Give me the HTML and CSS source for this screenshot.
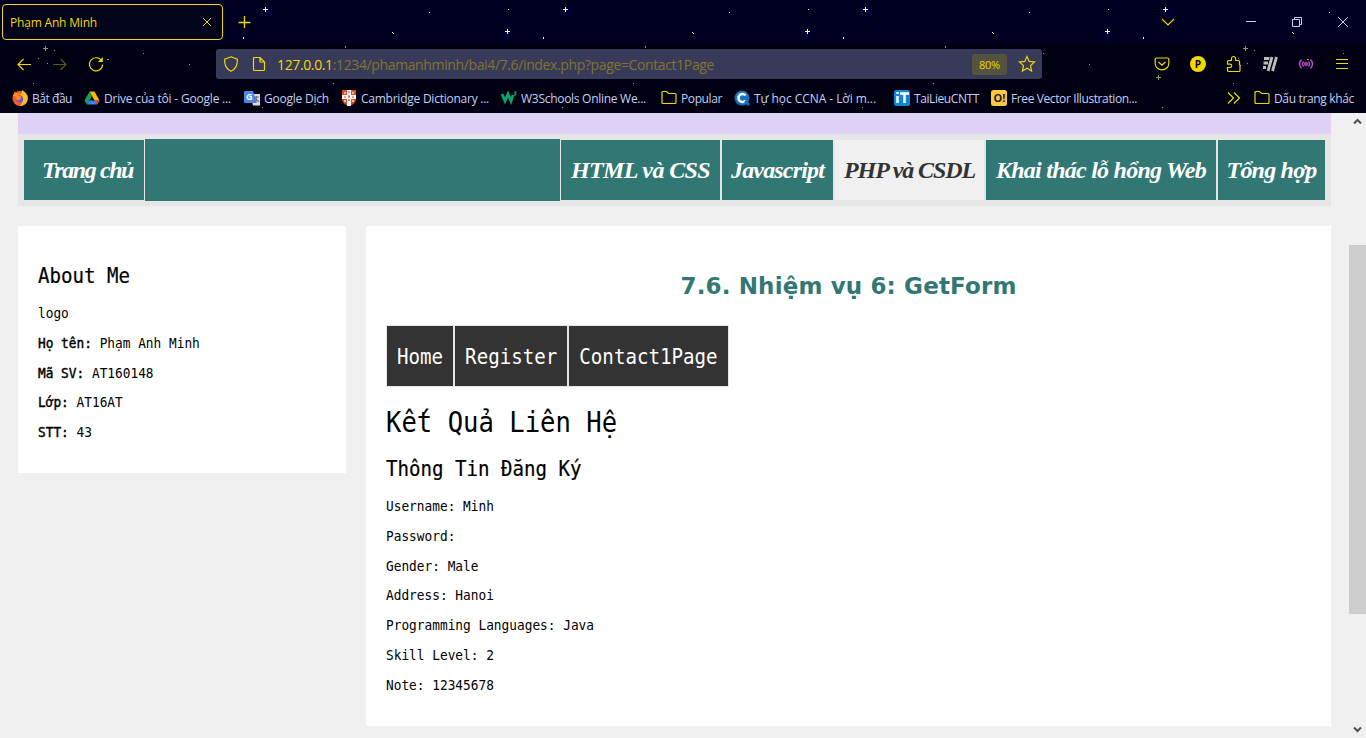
FILE: index.html
```html
<!DOCTYPE html>
<html lang="vi">
<head>
<meta charset="utf-8">
<title>Phạm Anh Minh</title>
<link rel="stylesheet" href="styles.css">
</head>
<body>
<header class="chrome">
  <svg class="stars" width="1366" height="113">
    <defs>
      <pattern id="sky" width="300" height="113" patternUnits="userSpaceOnUse">
        <circle cx="267" cy="12" r="6" fill="#000033"/><circle cx="207" cy="33" r="6" fill="#000033"/>
        <g fill="#ffff8c" shape-rendering="crispEdges">
          <path d="M263 9h5v1h-5zM265 7h1v5h-1zM205 31h5v1h-5zM207 29h1v5h-1zM243 37h1v2h-1zM129 12h1v1h-1zM208 9h1v1h-1zM92 32h1v1h-1zM93 33h1v1h-1z"/>
          <path opacity=".6" d="M43 48h5v1h-5zM45 46h1v5h-1zM54 50h1v1h-1zM38 58h1v1h-1zM47 63h1v1h-1zM143 53h1v1h-1zM189 64h1v1h-1zM107 59h2v1h-2zM33 83h1v1h-1zM262 107h1v1h-1zM256 77h5v1h-5zM258 75h1v5h-1z"/>
        </g>
      </pattern>
    </defs>
    <rect width="1366" height="44" fill="#000021"/><rect y="44" width="1366" height="69" fill="#000013"/>
    <rect width="1366" height="113" fill="url(#sky)"/>
  </svg>
  <div class="tabs">
    <div class="tab"><span class="fit" data-w="87">Phạm Anh Minh</span>
      <svg width="16" height="16"><path d="M4 4l8 8M12 4l-8 8" stroke-width="1"/></svg></div>
    <svg class="plus" width="16" height="16"><path d="M7.500 2v12M1.500 8.500h12" stroke-width="1.300"/></svg>
    <svg class="chev" width="16" height="16"><path d="M2 5l6 6 6-6"/></svg>
    <div class="win">
      <svg width="16" height="16"><path d="M3 7.500h10"/></svg>
      <svg width="16" height="16"><path d="M3.500 5.500h7v7h-7zM5.500 5.500v-2h7v7h-2"/></svg>
      <svg width="16" height="16"><path d="M3 3l10 10M13 3L3 13"/></svg>
    </div>
  </div>
  <div class="toolbar">
    <div class="tools">
      <svg width="18" height="18"><path d="M16 9.500H2.500M8.500 4L3 9.500 8.500 15"/></svg>
      <svg class="dim" width="18" height="18"><path d="M2 9.500h13.500M9.500 4L15 9.500 9.500 15"/></svg>
      <svg width="18" height="18"><path d="M14.700 6A6.600 6.600 0 1 0 15.600 9.500"/><path d="M15.800 2v5h-5z" fill="#f0d800" stroke="none"/></svg>
    </div>
    <div class="url">
      <svg width="18" height="18"><path d="M9 1.800l6.300 2.400c.5 5.500-1 9.400-6.300 12C3.700 13.600 2.200 9.700 2.700 4.200z"/></svg>
      <svg class="doc" width="18" height="18"><path d="M4.500 2.500h5.500L14.500 7v7.500q0 1-1 1h-9q-1 0-1-1v-11q0-1 1-1zM10 2.500V7h4.500"/></svg>
      <span class="addr fit" data-w="437"><b>127.0.0.1</b>:1234/phamanhminh/bai4/7.6/index.php?page=Contact1Page</span>
      <span class="zoom"><span class="fit" data-w="21">80%</span></span>
      <svg class="star" width="18" height="18"><path d="M9 1.500l2.200 4.900 5.300.6-4 3.600 1.100 5.400L9 13.300 4.400 16l1.100-5.400-4-3.600 5.300-.6z"/></svg>
    </div>
    <div class="tools right">
      <svg width="18" height="18"><path d="M3.500 3h11q1.300 0 1.300 1.300V8.500a6.800 6.400 0 0 1-13.600 0V4.300Q2.200 3 3.500 3zM5.500 7l3.500 3.300L12.500 7"/></svg>
      <svg width="18" height="18"><circle cx="9" cy="9" r="8" fill="#f0d800" stroke="none"/><text x="5.800" y="13" class="pmark">P</text></svg>
      <svg width="18" height="18"><path d="M6.500 5.500V3.500a2 2 0 0 1 4 0v2H13.500q1 0 1 1v3.500q1.500 0 .5 1.500v4q0 1-1 1H4q-1.500 0-1.500-1v-3h2.500a1.700 1.700 0 0 0 0-3.400H2.500v-2.500q0-1 1-1z"/></svg>
      <svg width="18" height="18"><path d="M3 3.500h5.500M2.500 8h4.500M2 12.500h3M11 2L7 16M15.500 2l-4 14" stroke="#bdbdbd" stroke-width="2.800"/></svg>
      <svg width="18" height="18" class="radio"><path d="M4.500 4.500Q0.500 9 4.500 13.500M13.500 4.500Q17.500 9 13.500 13.500M6.500 6.500q-2 2.500 0 5M11.500 6.500q2 2.500 0 5"/><circle cx="9" cy="9" r="1.300"/></svg>
      <svg width="18" height="18"><path d="M3 4.500h12M3 8.500h12M3 13.500h12" shape-rendering="crispEdges"/></svg>
    </div>
  </div>
  <div class="bookmarks">
    <div><svg width="16" height="16"><g stroke="none"><circle cx="8" cy="8.500" r="7.500" fill="#ff5b24"/><path d="M10 0q7 4 5.600 10a7.500 7.500 0 0 1-8 6Q13 12 8 5q2-2 2-5z" fill="#ffbd25"/><path d="M.6 6L3 1.500l2 2q3 0 4 2L7 7Z" fill="#ff8a16"/><circle cx="7.700" cy="9" r="3.500" fill="#7550d8"/><path d="M4 6q4-1 6 2-3 0-2 2-3 1-4-1z" fill="#ff8c1c"/></g></svg><span class="fit" data-w="40">Bắt đầu</span></div>
    <div><svg width="16" height="16"><g stroke="none"><path d="M5.500 1.500h5l5 9h-5z" fill="#ffba00"/><path d="M5.500 1.500L8 6l-5 8.500L.500 10.500z" fill="#0fa45c"/><path d="M5.500 10.500h10L13 14.500H3z" fill="#3b83f5"/><path d="M10.500 10.500h5l-2.500 4z" fill="#e94335"/></g></svg><span class="fit" data-w="127">Drive của tôi - Google ...</span></div>
    <div><svg width="16" height="16"><g stroke="none"><path d="M6 4h10v11.500H9z" fill="#ddd"/><path d="M1 1h8l4 12H1q-1 0-1-1V2q0-1 1-1z" fill="#4885ed"/><text x="2" y="10" class="gicon">G</text><path d="M10 7h5M12.500 6v2l-2 4M11 8l4 4" stroke="#667788" fill="none"/></g></svg><span class="fit" data-w="65">Google Dịch</span></div>
    <div><svg width="16" height="16"><path d="M1 0h14v9q0 5-7 7-7-2-7-7z" fill="#d84c34" stroke="none"/><path d="M8 0v16M1 7h14" stroke="#fff" stroke-width="4"/><path d="M3 3h2M11 3h2M3 11h2M11 11h2" stroke="#f3c65b" stroke-width="2"/><path d="M8 1v12M3 7h10" stroke="#d84c34" stroke-dasharray="2 2"/></svg><span class="fit" data-w="128">Cambridge Dictionary ...</span></div>
    <div><svg width="16" height="16"><path d="M1 4l3 7 3-7 3 7 2-6" stroke="#04a86b" stroke-width="2.800"/><path d="M13 2h2l-1 1.500q2 1-1 2" stroke="#04a86b"/></svg><span class="fit" data-w="125">W3Schools Online We...</span></div>
    <div><svg width="16" height="16"><path d="M1 12.500v-10q0-1 1-1h3.500l2 2H14q1 0 1 1v8q0 1-1 1H2q-1 0-1-1z"/></svg><span class="fit" data-w="41">Popular</span></div>
    <div><svg width="16" height="16"><circle cx="8" cy="8" r="7.500" fill="#1572bd" stroke="none"/><path d="M11.500 5.500a4 4 0 1 0 0 5" stroke="#fff" stroke-width="2.500"/><path d="M11 11l4 4" stroke="#1572bd" stroke-width="3"/></svg><span class="fit" data-w="122">Tự học CCNA - Lời m...</span></div>
    <div><svg width="16" height="16"><rect width="16" height="16" rx="2" fill="#0a88d1" stroke="none"/><path d="M3.500 6v7M6 3.500h9M10.500 3.500V13M3.500 2v2" stroke="#fff" stroke-width="2.500"/></svg><span class="fit" data-w="65">TaiLieuCNTT</span></div>
    <div><svg width="16" height="16"><rect width="16" height="16" rx="2.500" fill="#ffc83d" stroke="none"/><text x="2.500" y="12" class="oicon">O!</text></svg><span class="fit" data-w="126">Free Vector Illustration...</span></div>
    <div><svg width="16" height="16"><path d="M2 2.500L7.500 8 2 13.500M8 2.500L13.500 8 8 13.500"/></svg></div>
    <div><svg width="16" height="16"><path d="M1 12.500v-10q0-1 1-1h3.500l2 2H14q1 0 1 1v8q0 1-1 1H2q-1 0-1-1z"/></svg><span class="fit" data-w="80">Dấu trang khác</span></div>
  </div>
</header>
<div class="view">
  <div class="page">
    <div class="banner"></div>
    <nav class="menu">
      <a class="home"><span class="fit" data-w="91">Trang chủ</span></a>
      <a class="blank"></a>
      <a class="html"><span class="fit" data-w="139">HTML và CSS</span></a>
      <a class="js"><span class="fit" data-w="93">Javascript</span></a>
      <a class="php"><span class="fit" data-w="131">PHP và CSDL</span></a>
      <a class="web"><span class="fit" data-w="210">Khai thác lỗ hổng Web</span></a>
      <a class="all"><span class="fit" data-w="90">Tổng hợp</span></a>
    </nav>
    <div class="columns">
      <aside class="card about">
        <h2>About Me</h2>
        <p>logo</p>
        <p><strong>Họ tên:</strong> Phạm Anh Minh</p>
        <p><strong>Mã SV:</strong> AT160148</p>
        <p><strong>Lớp:</strong> AT16AT</p>
        <p><strong>STT:</strong> 43</p>
      </aside>
      <main class="card">
        <h3 class="title"><span class="fit" data-w="336">7.6. Nhiệm vụ 6: GetForm</span></h3>
        <nav class="links"><a><span>Home</span></a><a><span>Register</span></a><a><span>Contact1Page</span></a></nav>
        <h1>Kết Quả Liên Hệ</h1>
        <h2>Thông Tin Đăng Ký</h2>
        <p>Username: Minh</p>
        <p>Password:</p>
        <p>Gender: Male</p>
        <p>Address: Hanoi</p>
        <p>Programming Languages: Java</p>
        <p>Skill Level: 2</p>
        <p>Note: 12345678</p>
      </main>
    </div>
  </div>
  <div class="scroll">
    <svg width="17" height="17"><path d="M5 10.500L8.500 7l3.500 3.500"/></svg>
    <div class="thumb"></div>
    <svg width="17" height="17"><path d="M5 6.500L8.500 10 12 6.500"/></svg>
  </div>
</div>
<script src="fit.js"></script>
</body>
</html>
```
FILE: styles.css
```css
* { box-sizing: border-box; }
body { margin: 0; width: 1366px; height: 738px; overflow: hidden; background: #f0f0f0; }
h1, h2, h3, p { margin: 0; font-weight: 400; }
.fit { display: inline-block; white-space: nowrap; }
.chrome { position: relative; height: 113px; font: 12px/16px "Open Sans", "Noto Sans", sans-serif; color: #f0d800; }
.chrome svg { fill: none; stroke: #f0d800; stroke-width: 1.2; flex: none; display: block; }
.chrome .stars { position: absolute; left: 0; top: 0; z-index: -1; stroke: none; }
.tabs { height: 44px; display: flex; align-items: center; padding-left: 2px; }
.tab { width: 221px; height: 36px; border: 1px solid #f0d800; border-radius: 4px; background: #02041b; display: flex; align-items: center; justify-content: space-between; padding: 2px 7px 0; }
.tab svg { margin-top: -2px; }
.plus { margin-left: 14px; }
.chev { margin-left: 907px; }
.win { display: flex; gap: 30px; margin-left: 67px; }
.chrome .win svg { stroke: #c3d0f4; stroke-width: 1; }
.toolbar { height: 40px; display: flex; align-items: center; padding-left: 15px; }
.tools { display: flex; gap: 18px; width: 201px; }
.tools.right { margin-left: 111px; width: auto; }
.chrome .dim { opacity: .4; }
.url { width: 826px; height: 30px; border-radius: 3px; background: #383a59; box-shadow: 0 0 0 1px #000013; display: flex; align-items: center; padding-left: 6px; color: #80752c; font-size: 14px; }
.doc { margin-left: 10px; }
.addr { margin: 2px 0 0 9px; width: 437px; }
.addr b { color: #f0d800; font-weight: 400; }
.zoom { width: 35px; height: 21px; margin-left: 258px; border-radius: 3px; background: #55523f; color: #f0d800; font-size: 11px; line-height: 21px; text-align: center; }
.star { margin-left: 11px; }
.chrome .radio { stroke: #b64bc8; stroke-width: 1.5; }
.pmark { font: bold 10px "Open Sans"; fill: #000013; stroke: none; }
.gicon { font: bold 9px "Open Sans"; fill: #fff; }
.oicon { font: bold 11px "Open Sans"; fill: #222; stroke: none; }
.tools.right { margin-left: 111px; }
.bookmarks { height: 29px; padding: 0 0 1px 12px; color: #c3d0f4; display: grid; grid-template-columns: 72px 160px 97px 160px 160px 73px 160px 97px 235px 28px 110px; align-items: center; }
.bookmarks div { display: flex; align-items: center; gap: 4px; }
.bookmarks span { padding-top: 2px; }
.view { height: 625px; display: flex; justify-content: space-between; }
.page { width: 1331px; padding-left: 18px; }
.banner { height: 21px; background: #e0d2f7; }
.menu { height: 72px; padding: 5px 6px; background: #e6e6e6; display: flex; align-items: center; font: italic bold 24px/60px "Liberation Serif", serif; color: #fff; }
.menu a { height: 60px; background: #317773; display: flex; justify-content: center; margin-right: 2px; }
.menu .home { width: 120px; margin-right: 1px; padding-left: 7px; }
.menu .blank { width: 415px; height: 62px; margin-right: 1px; }
.menu .html { width: 159px; margin-right: 2px; }
.menu .js { width: 111px; }
.menu .php { width: 149px; background: #f0f0f0; color: #333; }
.menu .web { width: 230px; }
.menu .all { width: 107px; margin-right: 0; }
.columns { margin-top: 20px; display: flex; gap: 20px; align-items: flex-start; }
.card { width: 965px; height: 500px; background: #fff; padding: 20px; font: 12.8px/29.83px "DejaVu Sans Mono", monospace; color: #000; }
.about { width: 328px; height: 247px; padding-top: 27px; }
.card p { height: 29.83px; white-space: pre; transform: scaleY(1.1); }
.card strong { font-weight: 400; -webkit-text-stroke: .4px #000; }
.card h2 { font-size: 19.1px; line-height: 45px; height: 46px; -webkit-text-stroke: .2px #000; transform: scaleY(1.1); }
.title { height: 79px; line-height: 80px; color: #317773; text-align: center; font: bold 23px/80px "DejaVu Sans", sans-serif; }
.links { display: flex; gap: 2px; width: 343px; height: 62px; border: 1px solid #e6e6e6; background: #e6e6e6; color: #fff; font-size: 19.15px; line-height: 61px; }
.links a { background: #333; padding: 0 10px; height: 60px; }
.links a:last-child { flex: 1; padding-right: 0; }
.links span { display: inline-block; transform: scaleY(1.1); }
.card h1 { font-size: 25.6px; line-height: 70px; height: 59px; transform: scaleY(1.1); transform-origin: 50% 35px; }
.scroll { width: 17px; background: #f0f0f0; }
.scroll svg { display: block; fill: none; stroke: #505050; stroke-width: 2; }
.thumb { height: 369px; margin: 115px 0 107px; background: #cdcdcd; }
```
FILE: fit.js
```js
// Adjust tracking so each label fills its declared width.
document.querySelectorAll('.fit').forEach(function (el) {
  var box = el.style.width;
  el.style.width = 'max-content';
  var natural = el.getBoundingClientRect().width;
  el.style.width = box;
  var count = Array.from(el.textContent).length;
  el.style.letterSpacing = ((Number(el.dataset.w) - natural) / count) + 'px';
});
```
